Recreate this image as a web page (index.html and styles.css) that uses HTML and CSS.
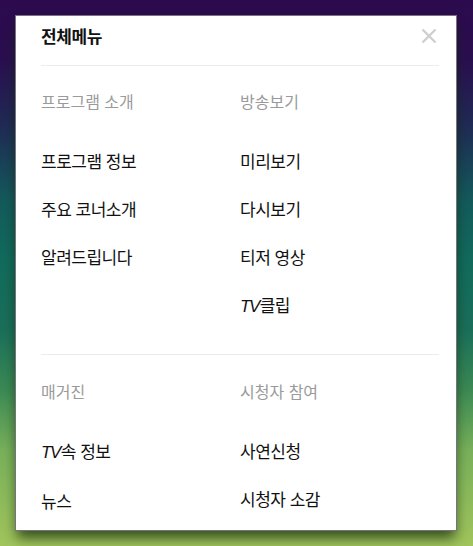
FILE: index.html
```html
<!DOCTYPE html>
<html lang="ko">
<head>
<meta charset="utf-8">
<title>전체메뉴</title>
<link rel="stylesheet" href="styles.css">
</head>
<body>
<div class="modal">
  <div class="modal-head">
    <h2 class="modal-title">전체메뉴</h2>
    <button class="close" aria-label="닫기">
      <svg width="16" height="16" viewBox="0 0 16 16"><path d="M1.5 1.5 L14.5 14.5 M14.5 1.5 L1.5 14.5" stroke="#cfcfcf" stroke-width="2.4" fill="none"/></svg>
    </button>
  </div>
  <div class="section first">
    <ul class="col">
      <li class="cat">프로그램 소개</li>
      <li class="item">프로그램 정보</li>
      <li class="item">주요 코너소개</li>
      <li class="item">알려드립니다</li>
    </ul>
    <ul class="col">
      <li class="cat">방송보기</li>
      <li class="item">미리보기</li>
      <li class="item">다시보기</li>
      <li class="item">티저 영상</li>
      <li class="item"><i>TV</i>클립</li>
    </ul>
  </div>
  <div class="section second">
    <ul class="col">
      <li class="cat">매거진</li>
      <li class="item"><i>TV</i>속 정보</li>
      <li class="item">뉴스</li>
    </ul>
    <ul class="col">
      <li class="cat">시청자 참여</li>
      <li class="item">사연신청</li>
      <li class="item">시청자 소감</li>
    </ul>
  </div>
</div>
</body>
</html>
```

FILE: styles.css
```css
html, body {
  margin: 0;
  padding: 0;
}
body {
  width: 473px;
  height: 546px;
  overflow: hidden;
  background: linear-gradient(to bottom, #2c0a4d 0px, #2a0f50 60px, #1f2d55 130px, #145a5c 200px, #116b5c 260px, #1a6f5a 330px, #3c8a55 390px, #78b05a 450px, #a1c55c 546px);
  font-family: "Noto Sans CJK KR", "Noto Sans", sans-serif;
  padding: 15px 0 0 15px;
  box-sizing: border-box;
}
.modal {
  width: 442px;
  height: 516px;
  box-sizing: border-box;
  background: #fff;
  border: 1px solid #777480;
  padding: 0 17px 0 25px;
  box-shadow: 0 9px 12px -2px rgba(20, 40, 10, 0.75);
}
.modal-head {
  display: flex;
  justify-content: space-between;
  align-items: center;
  padding: 8px 0 17px;
  border-bottom: 1px solid #ececec;
}
.modal-title {
  margin: 0;
  font-size: 17px;
  line-height: 24px;
  font-weight: 700;
  color: #111;
  letter-spacing: -0.4px;
}
.close {
  border: 0;
  background: none;
  padding: 0;
  margin-right: 2px;
  width: 16px;
  height: 16px;
  display: flex;
}
.section {
  display: grid;
  grid-template-columns: 199px 1fr;
}
.section.first {
  padding: 23px 0 35px;
  border-bottom: 1px solid #ececec;
}
.section.second {
  padding: 24px 0 0;
}
.col {
  list-style: none;
  margin: 0;
  padding: 0;
  display: flex;
  flex-direction: column;
  gap: 24px;
}
.cat {
  font-size: 16px;
  line-height: 24px;
  color: #9a9a9a;
  letter-spacing: 0;
  margin-bottom: 12px;
}
.item {
  font-size: 17px;
  line-height: 24px;
  color: #111;
  letter-spacing: -0.5px;
}
.item i {
  font-family: "Liberation Sans", sans-serif;
  font-style: italic;
  letter-spacing: -1.5px;
  margin-right: 1px;
}
```
